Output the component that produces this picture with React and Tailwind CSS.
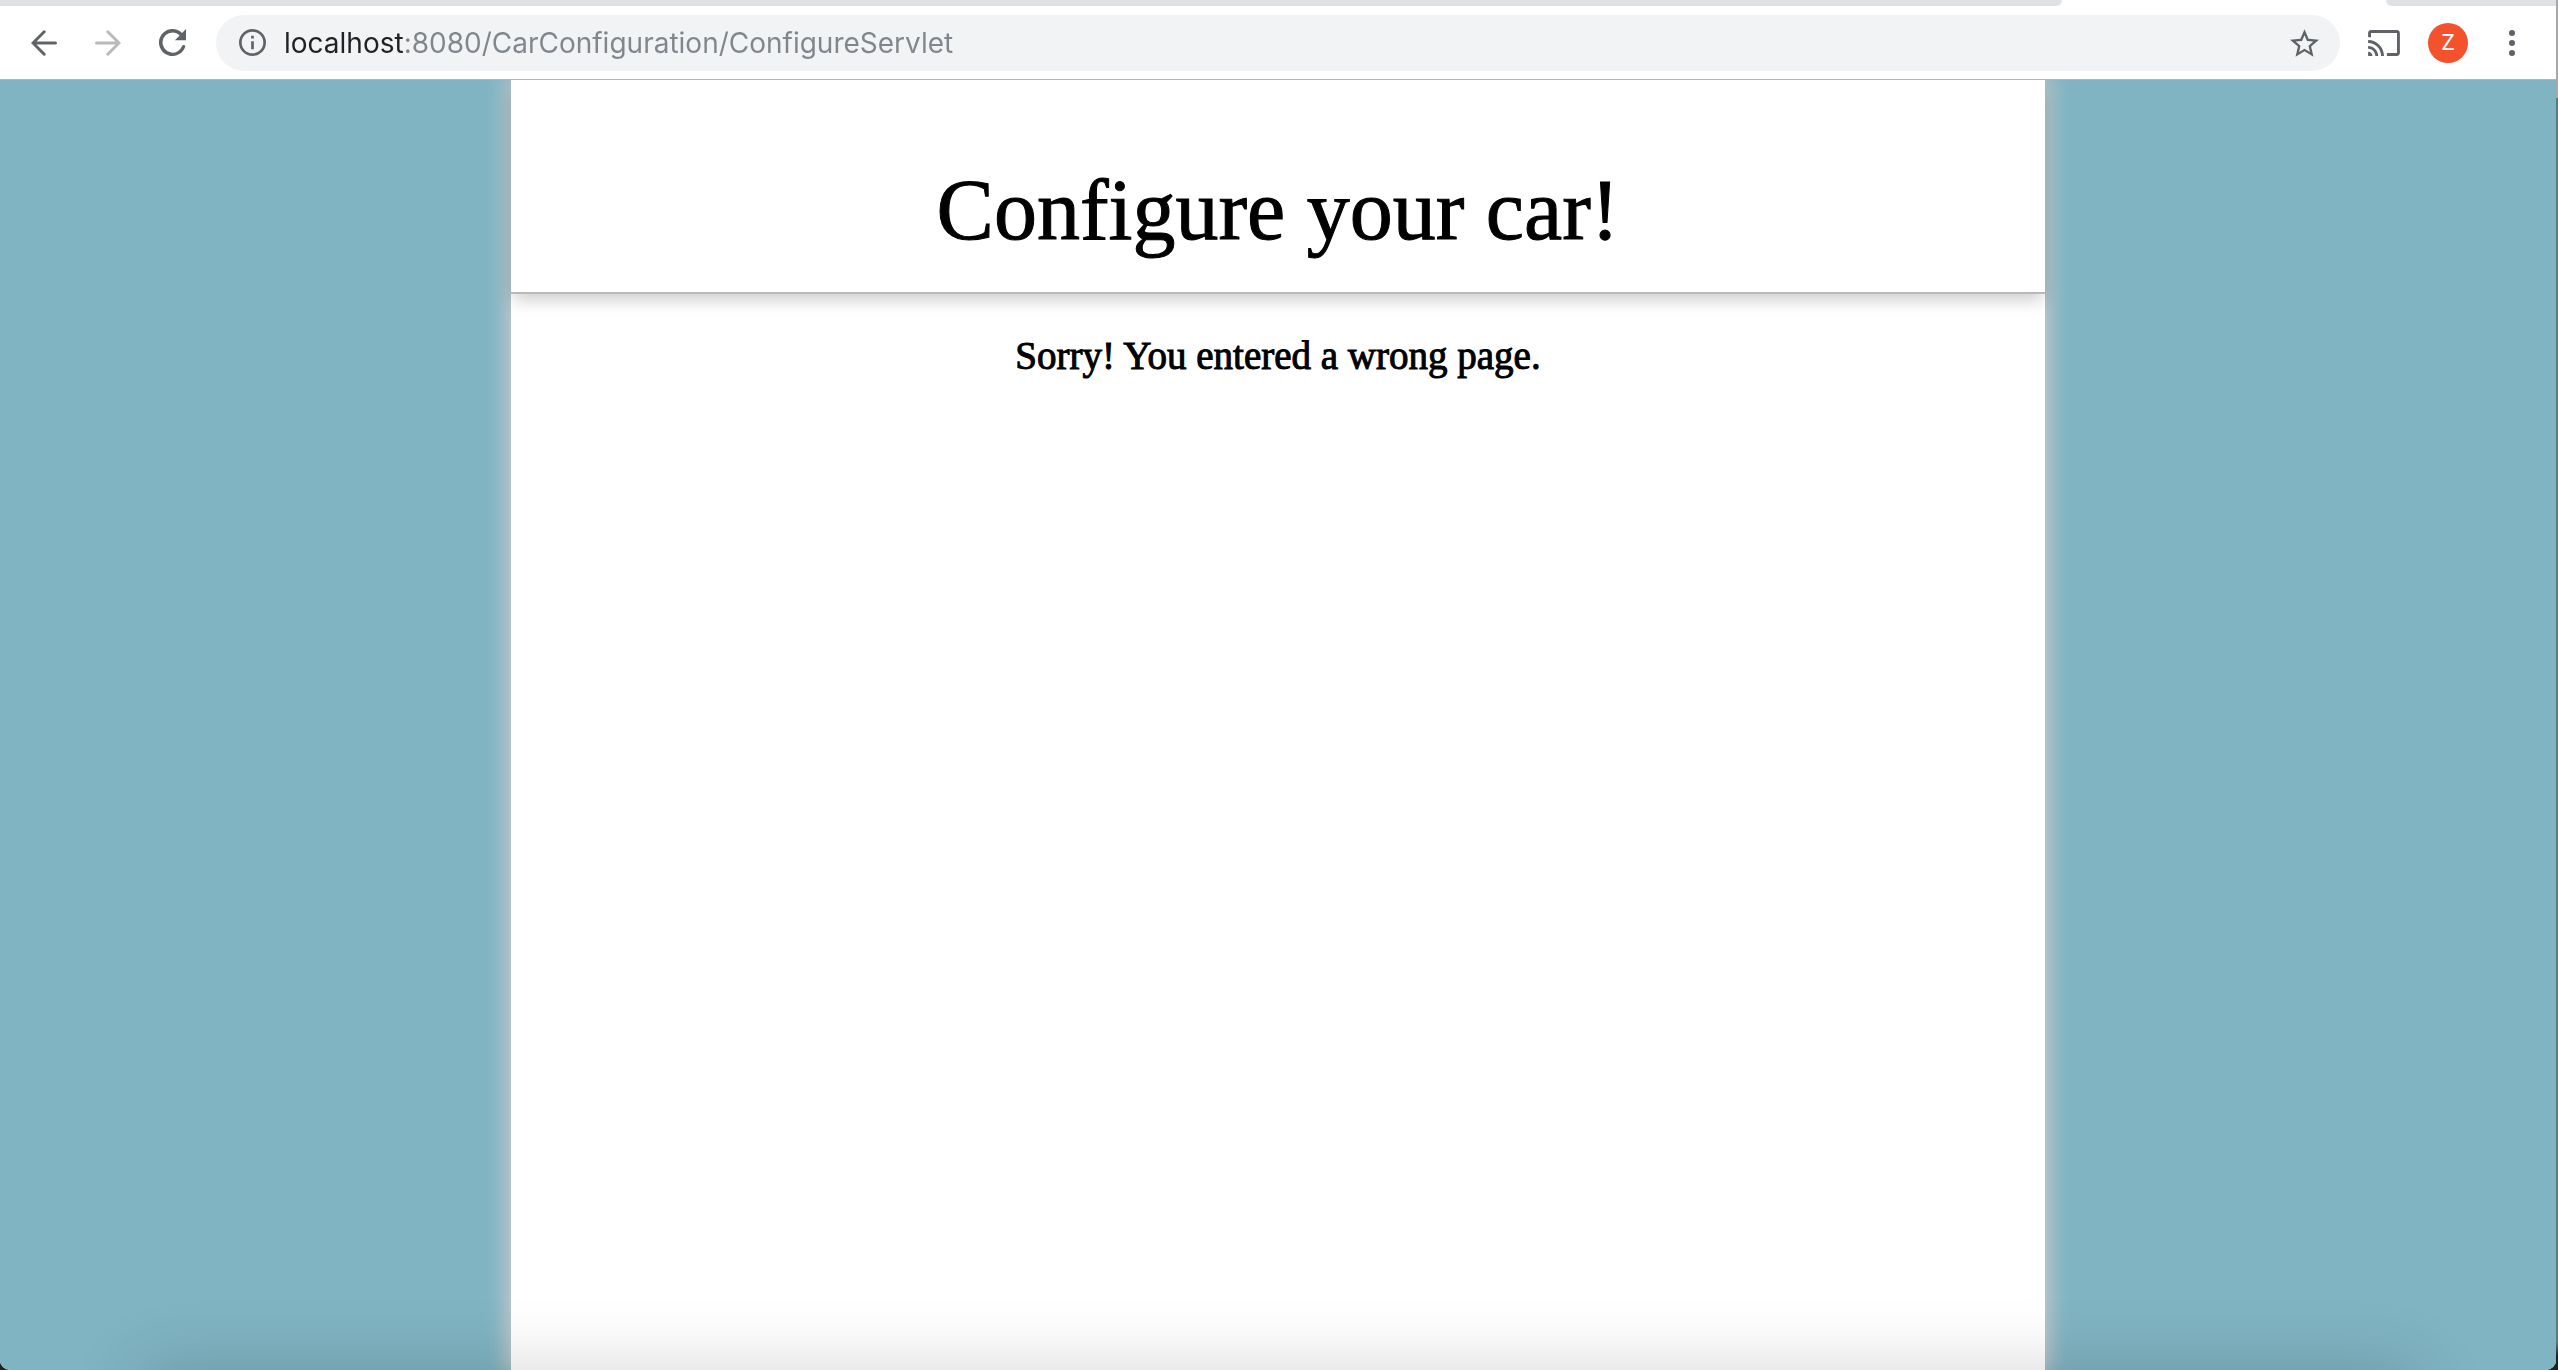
import React from "react";

function ToolButton({ label, className = "text-[#5f6368]", children }) {
  return (
    <button
      type="button"
      aria-label={label}
      className={`flex size-10 shrink-0 items-center justify-center ${className}`}
    >
      {children}
    </button>
  );
}

function Arrow({ flip = false }) {
  return (
    <svg
      viewBox="0 0 26 26"
      className={flip ? "size-[26px] rotate-180" : "size-[26px]"}
      fill="none"
      stroke="currentColor"
      strokeWidth="3"
      strokeLinecap="round"
      strokeLinejoin="miter"
      aria-hidden="true"
    >
      <path d="M24.5 13H2.5M13.2 1.8L2 13l11.2 11.2" />
    </svg>
  );
}

function Toolbar() {
  return (
    <div className="flex h-[74px] shrink-0 items-center border-b border-[#b4b4b4] bg-white px-6">
      <div className="flex w-[192px] shrink-0 items-center gap-6">
        <ToolButton label="Back">
          <Arrow />
        </ToolButton>
        <ToolButton label="Forward" className="text-[#bababa]">
          <Arrow flip />
        </ToolButton>
        <ToolButton label="Reload">
          <svg viewBox="4 4 16 16" className="size-[27px]" fill="currentColor" aria-hidden="true">
            <path d="M17.65 6.35A7.958 7.958 0 0 0 12 4a8 8 0 1 0 7.5 10.7a.95.95 0 0 0-1.8-.6A6 6 0 1 1 12 6c1.66 0 3.14.69 4.22 1.78L13.4 10.6H20V4z" />
          </svg>
        </ToolButton>
      </div>
      <form className="flex h-14 min-w-0 flex-1 items-center rounded-full bg-[#f1f3f4] px-4">
        <ToolButton label="Site information">
          <svg viewBox="2 2 20 20" className="size-[27px]" fill="currentColor" aria-hidden="true">
            <path d="M11 7h2v2h-2zm0 4h2v6h-2zm1-9a10 10 0 1 0 0 20 10 10 0 0 0 0-20zm0 18a8 8 0 1 1 0-16 8 8 0 0 1 0 16z" />
          </svg>
        </ToolButton>
        <input
          type="text"
          aria-label="Address"
          defaultValue="localhost:8080/CarConfiguration/ConfigureServlet"
          className="ml-3 h-10 min-w-0 flex-1 bg-[linear-gradient(90deg,#202124_120px,#80868b_120px)] bg-clip-text font-['Inter',sans-serif] text-[28px] leading-10 text-transparent outline-none"
        />
        <ToolButton label="Bookmark this page">
          <svg viewBox="2 2 20 19" className="h-[28px] w-[29px]" fill="currentColor" aria-hidden="true">
            <path d="M22 9.24l-7.19-.62L12 2 9.19 8.63 2 9.24l5.46 4.73L5.82 21 12 17.27 18.18 21l-1.63-7.03L22 9.24zM12 15.4l-3.76 2.27 1-4.28-3.32-2.88 4.38-.38L12 6.1l1.71 4.04 4.38.38-3.32 2.88 1 4.28L12 15.4z" />
          </svg>
        </ToolButton>
      </form>
      <div className="ml-6 flex shrink-0 items-center gap-6">
        <ToolButton label="Cast">
          <svg viewBox="1 3 22 18" className="h-[26px] w-8" fill="currentColor" aria-hidden="true">
            <path d="M21 3H3c-1.1 0-2 .9-2 2v3h2V5h18v14h-7v2h7c1.1 0 2-.9 2-2V5c0-1.1-.9-2-2-2zM1 18v3h3c0-1.66-1.34-3-3-3zm0-4v2c2.76 0 5 2.24 5 5h2c0-3.87-3.13-7-7-7zm0-4v2c4.97 0 9 4.03 9 9h2c0-6.08-4.93-11-11-11z" />
          </svg>
        </ToolButton>
        <ToolButton label="Profile">
          <span className="flex size-10 items-center justify-center rounded-full bg-[#f4522d] font-['Roboto',sans-serif] text-[22px] leading-none text-white">
            Z
          </span>
        </ToolButton>
        <ToolButton label="Menu">
          <svg viewBox="0 0 6 26" className="h-[26px] w-[6px]" fill="currentColor" aria-hidden="true">
            <circle cx="3" cy="3" r="3" />
            <circle cx="3" cy="13" r="3" />
            <circle cx="3" cy="23" r="3" />
          </svg>
        </ToolButton>
      </div>
    </div>
  );
}

export default function App() {
  return (
    <div className="relative flex h-screen flex-col overflow-hidden bg-[linear-gradient(#a8a8a8_98px,#557a84_98px,#557a84_98%,#1d2321_99%)] pr-[2px]">
      <div className="flex min-h-0 flex-1 flex-col overflow-hidden rounded-b-[10px] bg-white">
        <div className="flex h-[6px] shrink-0 justify-between">
          <div className="mr-[324px] flex-1 rounded-br-[14px] bg-[#dee1e6]" />
          <div className="w-[170px] rounded-bl-[14px] bg-[#dee1e6]" />
        </div>
        <Toolbar />
        <div className="flex min-h-0 flex-1 justify-center overflow-hidden bg-[#80b4c3]">
          <main className="w-3/5 bg-white text-center font-['Liberation_Serif',serif] text-black shadow-[0_0_20px_4px_#cccccc]">
            <header className="border-b-2 border-[#b9b9b9] pt-20 pb-8 shadow-[0_8px_16px_-2px_rgba(0,0,0,0.2)]">
              <h1 className="text-[86px] leading-[100px] [-webkit-text-stroke:1px_black]">Configure your car!</h1>
            </header>
            <p className="mt-10 text-[39px] leading-[44px] [-webkit-text-stroke:1px_black]">
              Sorry! You entered a wrong page.
            </p>
          </main>
        </div>
      </div>
      <div className="pointer-events-none absolute inset-x-[140px] bottom-[-60px] h-[60px] shadow-[0_0_70px_rgba(0,0,0,0.18)]" />
    </div>
  );
}
